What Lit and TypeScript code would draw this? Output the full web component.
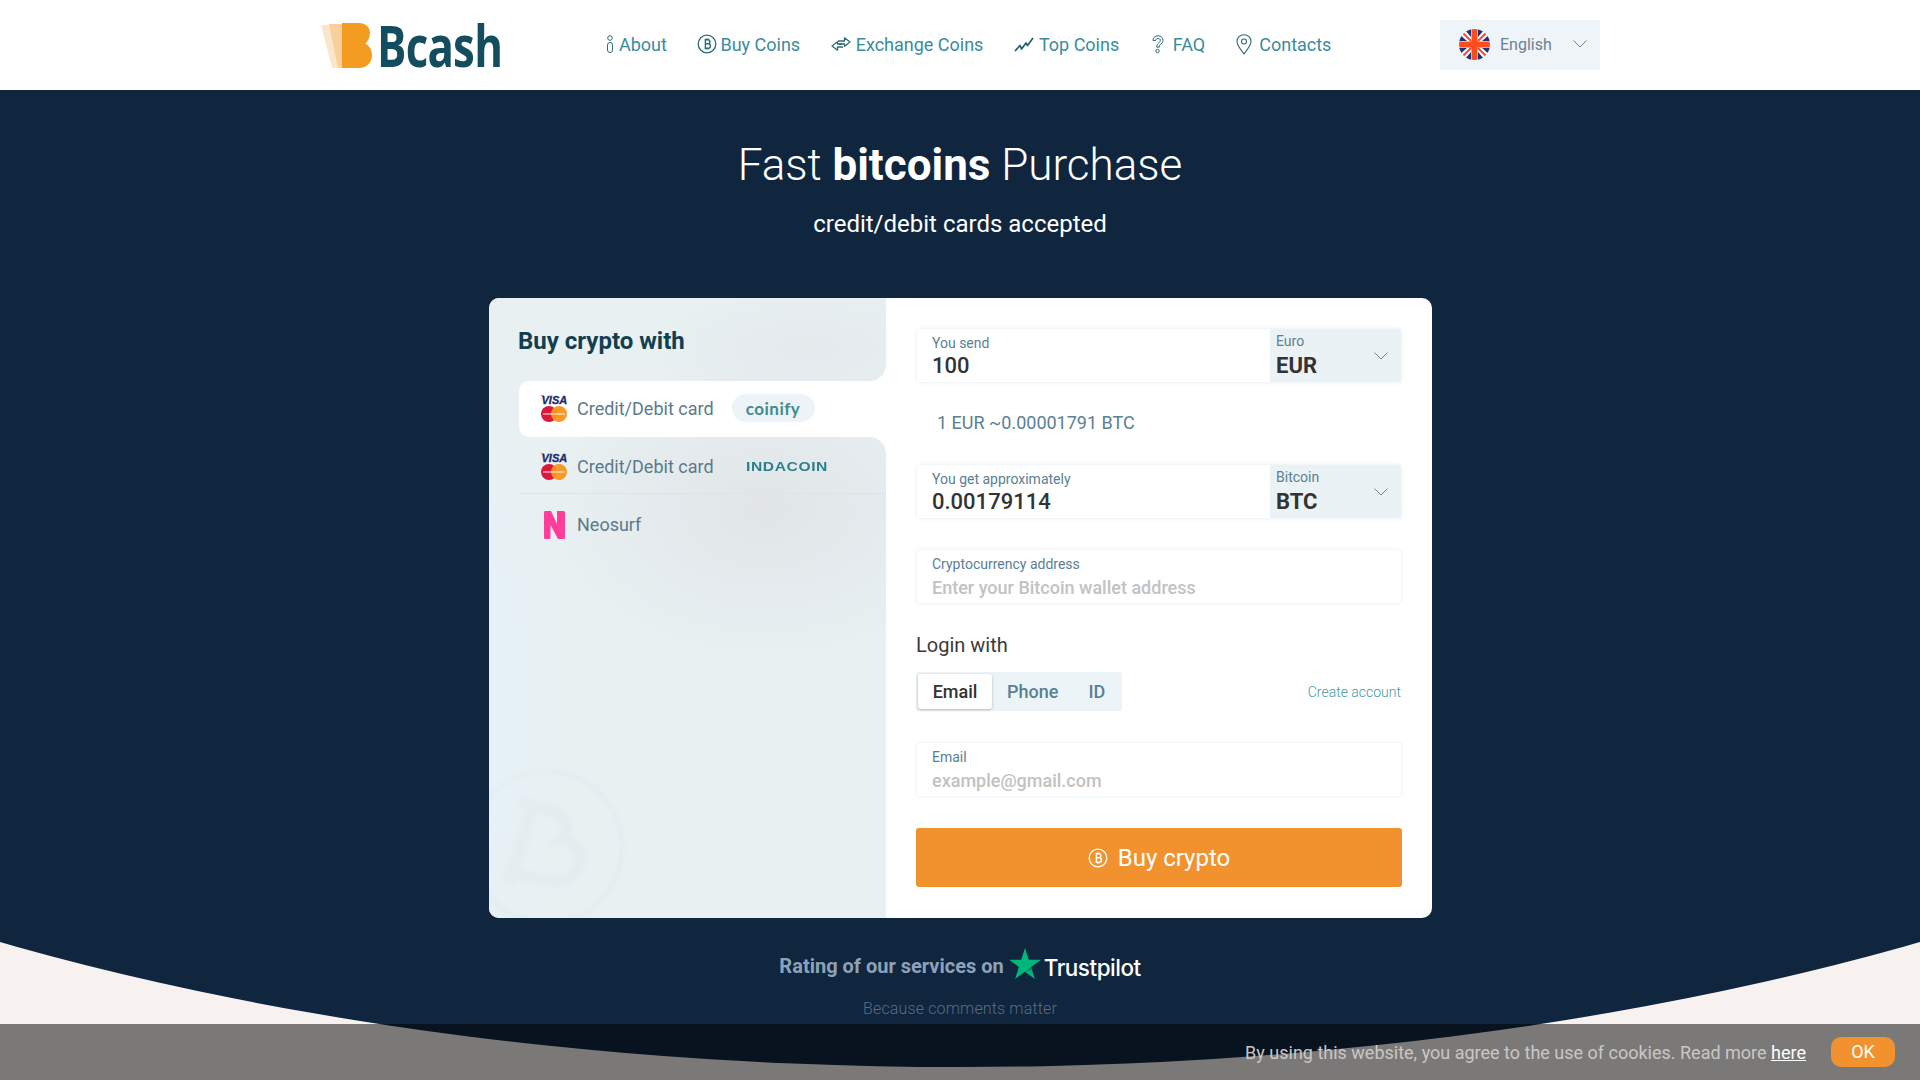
import {LitElement, css, html, svg} from 'lit';
import {customElement} from 'lit/decorators.js';

const NAV_STROKE = '#2f6a78';

const btcIcon = (size: number, color: string) => html`
  <svg width=${size} height=${size} viewBox="0 0 20 20" fill="none" stroke=${color}>
    <circle cx="10" cy="10" r="8.8" stroke-width="1.3"></circle>
    <path
      stroke-width="1.4"
      d="M7.6 5.8h3.2c1.3 0 2.1.8 2.1 2 0 1.1-.8 2-2.1 2H8.2m0 0h3c1.4 0 2.2.9 2.2 2.1 0 1.3-.9 2.3-2.3 2.3H7.6M8.4 5.8v8.4M9.4 4.4v1.4m1.8-1.4v1.4m-1.8 8.4v1.4m1.8-1.4v1.4"
    ></path>
  </svg>
`;

const navIcons = {
  about: svg`<svg width="8" height="18" viewBox="0 0 8 18" fill="none" stroke=${NAV_STROKE} stroke-width="1">
    <circle cx="4" cy="3" r="2.3"></circle><rect x="1.5" y="7.5" width="5" height="10" rx="2.5"></rect></svg>`,
  exchange: svg`<svg width="20" height="16" viewBox="0 0 20 16" fill="none" stroke=${NAV_STROKE} stroke-width="1.3" stroke-linejoin="round">
    <path d="M7 5h6.500V1.800L19 6l-5.500 4.200V8H8"></path><path d="M12 11H6.500v3.200L1 10l5.500-4.200V8H11"></path></svg>`,
  top: svg`<svg width="20" height="16" viewBox="0 0 20 16" fill="none" stroke="#1f5f68" stroke-width="1.7" stroke-linejoin="round">
    <path d="M1 15l5-5.500 1.500 3.500 4.500-6 1.500 2.500L19 2"></path></svg>`,
  faq: svg`<svg width="12" height="19" viewBox="0 0 12 19" fill="none" stroke=${NAV_STROKE} stroke-width="1">
    <path d="M1 5.500C1 2.600 3.200.8 6 .8s5 1.900 5 4.500c0 2.300-1.600 3.300-2.800 4.300-.8.700-1 1.300-1 2.600H4.800c0-2 .5-3 1.700-4 1-.8 1.800-1.500 1.800-2.800 0-1.100-1-2-2.300-2-1.400 0-2.300.8-2.400 2.100z"></path>
    <circle cx="5.500" cy="16" r="1.700"></circle></svg>`,
  contacts: svg`<svg width="16" height="21" viewBox="0 0 16 21" fill="none" stroke=${NAV_STROKE} stroke-width="1.100">
    <path d="M8 20C4.500 15 1 11.500 1 7.500 1 3.500 4 .8 8 .8s7 2.700 7 6.700c0 4-3.500 7.500-7 12.500z"></path>
    <circle cx="8" cy="7.500" r="2.500"></circle></svg>`,
};

const chevron = html`<svg class="chev" width="14" height="8" viewBox="0 0 14 8" fill="none" stroke="#6b8494" stroke-width="1">
  <path d="M.5.500 7 7l6.500-6.500"></path></svg>`;

const cardsIcon = html`<svg width="27" height="28" viewBox="0 0 27 28">
  <path d="M0 1h3.500l1.500 4z" fill="#f2a12e"></path>
  <text x="1.500" y="10" font-family="Liberation Sans" font-size="11" font-weight="700" font-style="italic" fill="#1a2a6c" stroke="#1a2a6c" stroke-width=".3">VISA</text>
  <circle cx="9" cy="20" r="8" fill="#d9183b"></circle>
  <circle cx="19" cy="20" r="8" fill="#f7941d" fill-opacity=".95"></circle>
  <rect x="3" y="19" width="22" height="2" fill="#fff" fill-opacity=".45"></rect>
</svg>`;

@customElement('app-root')
export class AppRoot extends LitElement {
  static styles = css`
    :host {
      display: block;
      position: relative;
      height: 100vh;
      overflow: hidden;
      background: #f7f2f0;
      font-family: Roboto, 'Liberation Sans', sans-serif;
    }

    /* big ellipse gives the hero its curved bottom edge */
    .curve {
      position: absolute;
      top: -363px;
      left: -740px;
      width: 3400px;
      height: 1430px;
      border-radius: 50%;
      background: #10263f;
    }

    header {
      position: relative;
      display: flex;
      align-items: center;
      height: 90px;
      padding: 0 320px 0 321px;
      background: #fff;
    }

    .logo {
      display: flex;
      align-items: center;
      width: 285px;
      flex: none;
    }

    .logo-word {
      font-family: 'Open Sans', sans-serif;
      font-weight: 700;
      font-size: 58px;
      line-height: 60px;
      letter-spacing: -1px;
      color: #144e5e;
      margin-left: 4px;
      transform: scaleX(0.755);
      transform-origin: left center;
    }

    nav {
      display: flex;
      gap: 30.5px;
      margin-bottom: 2px;
    }

    nav a {
      display: flex;
      align-items: center;
      gap: 5px;
      font-size: 18px;
      color: #3a8c9c;
      white-space: nowrap;
    }

    nav a.buy-link {
      gap: 3px;
    }

    nav a.faq {
      gap: 8.500px;
      margin-left: 2.500px;
    }

    nav a.contacts {
      gap: 7.500px;
    }

    .lang {
      display: flex;
      align-items: center;
      width: 160px;
      height: 50px;
      margin-left: auto;
      padding: 0 0 2px 19px;
      box-sizing: border-box;
      background: #eef4f8;
      font-size: 16px;
      color: #6b8294;
    }

    .lang svg:first-child {
      margin-right: 10px;
    }

    .lang .chev {
      margin-left: 21px;
    }

    main {
      position: relative;
      display: flex;
      flex-direction: column;
      align-items: center;
      color: #fff;
    }

    h1 {
      margin: 49px 0 0;
      font-size: 44px;
      line-height: 52px;
      font-weight: 300;
    }

    h1 b {
      font-weight: 700;
    }

    .sub {
      margin-top: 19px;
      font-size: 24px;
      line-height: 28px;
    }

    .card {
      display: flex;
      width: 943px;
      height: 620px;
      margin: 60px 0 0 1px;
      border-radius: 10px;
      overflow: hidden;
      background: #fff;
    }

    .methods {
      position: relative;
      flex: none;
      width: 397px;
      background:
        radial-gradient(ellipse 220px 150px at 70% 34%, #e1e5e8 0%, rgba(225, 229, 232, 0) 100%),
        radial-gradient(ellipse 160px 60px at 80% 8%, #e4e9ec 0%, rgba(228, 233, 236, 0) 100%),
        radial-gradient(ellipse 70px 300px at 0% 65%, #e6f2f8 0%, rgba(230, 242, 248, 0) 100%),
        #e8f0f2;
      color: #5b7a8c;
    }

    .coin {
      position: absolute;
      left: -28px;
      bottom: -14px;
      opacity: 0.3;
      filter: blur(1.500px);
    }

    h2 {
      height: 83px;
      margin: 0;
      padding-left: 29px;
      box-sizing: border-box;
      font-size: 24px;
      line-height: 86px;
      font-weight: 700;
      color: #123f4f;
      position: relative;
    }

    .method {
      position: relative;
      display: flex;
      align-items: center;
      gap: 9px;
      height: 57px;
      box-sizing: border-box;
      margin-left: 30px;
      padding: 2px 0 0 21px;
      font-size: 18px;
    }

    .method span:first-of-type {
      margin-left: 1px;
    }

    .method.last {
      padding-top: 4px;
    }

    .method.on {
      height: 56px;
      padding: 0 0 2px 21px;
      background: #fff;
      border-radius: 10px 0 0 10px;
    }

    /* concave corners above and below the selected row */
    .method.on::before,
    .method.on::after {
      content: '';
      position: absolute;
      right: 0;
      width: 16px;
      height: 16px;
    }

    .method.on::before {
      top: -16px;
      background: radial-gradient(circle at 0 0, transparent 15.500px, #fff 16px);
    }

    .method.on::after {
      bottom: -16px;
      background: radial-gradient(circle at 0 100%, transparent 15.500px, #fff 16px);
    }

    .method.line {
      border-bottom: 1px solid #dde4e8;
    }

    .coinify {
      display: flex;
      align-items: center;
      justify-content: center;
      width: 83px;
      height: 28px;
      margin-left: 9px;
      border-radius: 14px;
      background: #edf3f7;
      font-family: Lato, sans-serif;
      font-weight: 700;
      font-size: 17px;
      letter-spacing: 0.5px;
      color: #3d8b93;
    }

    .indacoin {
      margin-left: 23px;
      font-family: 'Liberation Sans', sans-serif;
      font-weight: 700;
      font-size: 13px;
      letter-spacing: 0.5px;
      color: #2a8090;
      transform: scaleX(1.2);
      transform-origin: left center;
    }

    .neosurf {
      margin: 0 2px 0 3px;
    }

    form {
      flex: 1;
      padding: 31px 30px 0;
    }

    .field {
      display: flex;
      height: 53px;
      margin: 0 1px;
      box-sizing: border-box;
      border-radius: 3px;
      box-shadow: 0 0 4px rgba(110, 150, 175, 0.2);
      background: #fff;
    }

    .field.gap {
      margin-top: 32px;
    }

    .main {
      flex: 1;
      padding: 6px 15px 0;
    }

    .select {
      position: relative;
      flex: none;
      width: 131px;
      box-sizing: border-box;
      padding: 4px 6px 0;
      background: #eaf2f6;
      border-radius: 0 3px 3px 0;
    }

    .select .chev {
      position: absolute;
      top: 23px;
      right: 13px;
    }

    label {
      display: block;
      font-size: 14px;
      line-height: 16px;
      color: #5a8094;
    }

    .value {
      margin-top: 2px;
      font-size: 22px;
      line-height: 26px;
      font-weight: 500;
      color: #333;
    }

    .select .value {
      margin-top: 4px;
      font-weight: 700;
    }

    .hint {
      margin-top: 3px;
      font-size: 18px;
      line-height: 26px;
      font-weight: 500;
      color: #c2c2c2;
    }

    .rate {
      height: 83px;
      padding-left: 21px;
      font-size: 18px;
      line-height: 82px;
      color: #5a8094;
    }

    .login {
      margin-top: 30px;
      font-size: 20px;
      line-height: 24px;
      color: #3a3a3a;
    }

    .tabrow {
      display: flex;
      align-items: center;
      justify-content: space-between;
      margin-top: 15px;
    }

    .tabs {
      display: flex;
      align-items: center;
      width: 206px;
      height: 39px;
      padding-left: 2px;
      box-sizing: border-box;
      border-radius: 3px;
      background: #edf4f8;
      font-size: 18px;
      font-weight: 500;
      color: #5a8094;
    }

    .tab {
      width: 74px;
      height: 35px;
      margin-right: 15px;
      border-radius: 3px;
      background: #fff;
      box-shadow: 0 1px 3px rgba(60, 80, 95, 0.35);
      text-align: center;
      line-height: 35px;
      color: #333;
    }

    .tabs span + span {
      margin-left: 30px;
    }

    .create {
      margin-right: 1px;
      font-size: 14px;
      font-weight: 300;
      color: #3f9aa0;
    }

    .buy {
      display: flex;
      align-items: center;
      justify-content: center;
      gap: 10px;
      height: 59px;
      margin-top: 32px;
      border-radius: 3px;
      background: #f2922e;
      font-size: 24px;
      color: #fff;
    }

    .rating {
      display: flex;
      align-items: center;
      height: 30px;
      margin: 33px 0 0 0;
      font-size: 20px;
      font-weight: 700;
      color: #8da2b8;
    }

    .rating svg {
      margin: -5px 3px 0 5px;
    }

    .pilot {
      font-family: Inter, Roboto, sans-serif;
      font-size: 22.500px;
      font-weight: 500;
      letter-spacing: -0.5px;
      color: #fff;
      margin-top: 3px;
    }

    .because {
      margin-top: 18px;
      font-size: 16px;
      line-height: 20px;
      font-weight: 300;
      letter-spacing: 0.15px;
      color: #596c83;
    }

    .cookies {
      position: absolute;
      left: 0;
      right: 0;
      bottom: 0;
      display: flex;
      align-items: center;
      justify-content: flex-end;
      gap: 25px;
      height: 56px;
      padding-right: 25px;
      background: rgba(0, 0, 0, 0.5);
      font-size: 18px;
      color: #c9c7c5;
    }

    .cookies a {
      color: #fff;
      text-decoration: underline;
    }

    .ok {
      width: 64px;
      height: 30px;
      border-radius: 10px;
      background: #f2922e;
      text-align: center;
      line-height: 30px;
      color: #fff;
    }
  `;

  private field(label: string, value: string, unitLabel: string, unit: string) {
    return html`
      <div class="field">
        <div class="main">
          <label>${label}</label>
          <div class="value">${value}</div>
        </div>
        <div class="select">
          <label>${unitLabel}</label>
          <div class="value">${unit}</div>
          ${chevron}
        </div>
      </div>
    `;
  }

  private input(label: string, hint: string) {
    return html`
      <div class="field gap">
        <div class="main">
          <label>${label}</label>
          <div class="hint">${hint}</div>
        </div>
      </div>
    `;
  }

  render() {
    return html`
      <div class="curve"></div>
      <header>
        <div class="logo">
          <svg width="52" height="46" viewBox="0 0 52 46">
            <path d="M0 3h14l8 43H11z" fill="#fbe6cd"></path>
            <path d="M8 2h16v44H17z" fill="#f9cf9c"></path>
            <path
              d="M21 1h17c7 0 11 4.500 11 10 0 4.500-2 8-4.500 10.500C48.500 24 51 28 51 33c0 7.500-5 13-13 13H21z"
              fill="#f49c21"
            ></path>
          </svg>
          <span class="logo-word">Bcash</span>
        </div>
        <nav>
          <a>${navIcons.about}About</a>
          <a class="buy-link">${btcIcon(20, NAV_STROKE)}Buy Coins</a>
          <a>${navIcons.exchange}Exchange Coins</a>
          <a>${navIcons.top}Top Coins</a>
          <a class="faq">${navIcons.faq}FAQ</a>
          <a class="contacts">${navIcons.contacts}Contacts</a>
        </nav>
        <div class="lang">
          <svg width="31" height="31" viewBox="0 0 31 31">
            <defs><clipPath id="fl"><circle cx="15.500" cy="15.500" r="15.500"></circle></clipPath></defs>
            <g clip-path="url(#fl)">
              <rect width="31" height="31" fill="#fff"></rect>
              <path d="M5 0h7v8zM19 0h7l-7 8zM5 31h7v-8zM19 31h7l-7-8zM0 5l8 7H0zM31 5l-8 7h8zM0 26l8-7H0zM31 26l-8-7h8z" fill="#22307a"></path>
              <path d="M0 0l12 12M31 0L19 12M0 31l12-12M31 31L19 19" stroke="#ff4b1f" stroke-width="2"></path>
              <path d="M12.500 0h6v12.500H31v6H18.500V31h-6V18.500H0v-6h12.500z" fill="#ff4b1f"></path>
            </g>
          </svg>
          English ${chevron}
        </div>
      </header>
      <main>
        <h1>Fast <b>bitcoins</b> Purchase</h1>
        <div class="sub">credit/debit cards accepted</div>
        <section class="card">
          <div class="methods">
            <svg class="coin" width="170" height="170" viewBox="0 0 170 170" fill="none" stroke="#dfe6ea">
              <circle cx="85" cy="85" r="76" stroke-width="6"></circle>
              <path stroke-width="14" d="M58 40l30 8c18 5 22 18 12 30 18 3 24 18 14 32-8 11-22 11-38 7l-32-8M72 44L48 122"></path>
            </svg>
            <h2>Buy crypto with</h2>
            <div class="method on">
              ${cardsIcon}<span>Credit/Debit card</span><span class="coinify">coinify</span>
            </div>
            <div class="method line">
              ${cardsIcon}<span>Credit/Debit card</span><span class="indacoin">INDACOIN</span>
            </div>
            <div class="method last">
              <svg class="neosurf" width="22" height="28" viewBox="0 0 22 28">
                <path d="M1 1.500C1 .5 1.500 0 2.500 0H8l6 13V0h6.500c.8 0 1.500.6 1.500 1.500V26.500c0 1-.7 1.500-1.500 1.500H15L7.500 14v12.500c0 1-.7 1.500-1.500 1.500H2.500C1.500 28 1 27.500 1 26.500z" fill="#ff3d9a"></path>
              </svg>
              <span>Neosurf</span>
            </div>
          </div>
          <form>
            ${this.field('You send', '100', 'Euro', 'EUR')}
            <div class="rate">1 EUR ~0.00001791 BTC</div>
            ${this.field('You get approximately', '0.00179114', 'Bitcoin', 'BTC')}
            ${this.input('Cryptocurrency address', 'Enter your Bitcoin wallet address')}
            <div class="login">Login with</div>
            <div class="tabrow">
              <div class="tabs">
                <div class="tab">Email</div>
                <span>Phone</span><span>ID</span>
              </div>
              <a class="create">Create account</a>
            </div>
            ${this.input('Email', 'example@gmail.com')}
            <div class="buy">${btcIcon(20, '#fff')}Buy crypto</div>
          </form>
        </section>
        <div class="rating">
          Rating of our services on
          <svg width="32" height="32" viewBox="0 0 32 32">
            <path d="M16 0l3.800 11.800H32l-9.900 7.200 3.800 12L16 23.700 6.100 31l3.800-12L0 11.800h12.200z" fill="#00b67a"></path>
            <path d="M22.100 19l.9 3-7 1.700z" fill="#008a5c"></path>
          </svg>
          <span class="pilot">Trustpilot</span>
        </div>
        <div class="because">Because comments matter</div>
      </main>
      <div class="cookies">
        <span>By using this website, you agree to the use of cookies. Read more <a>here</a></span>
        <div class="ok">OK</div>
      </div>
    `;
  }
}
